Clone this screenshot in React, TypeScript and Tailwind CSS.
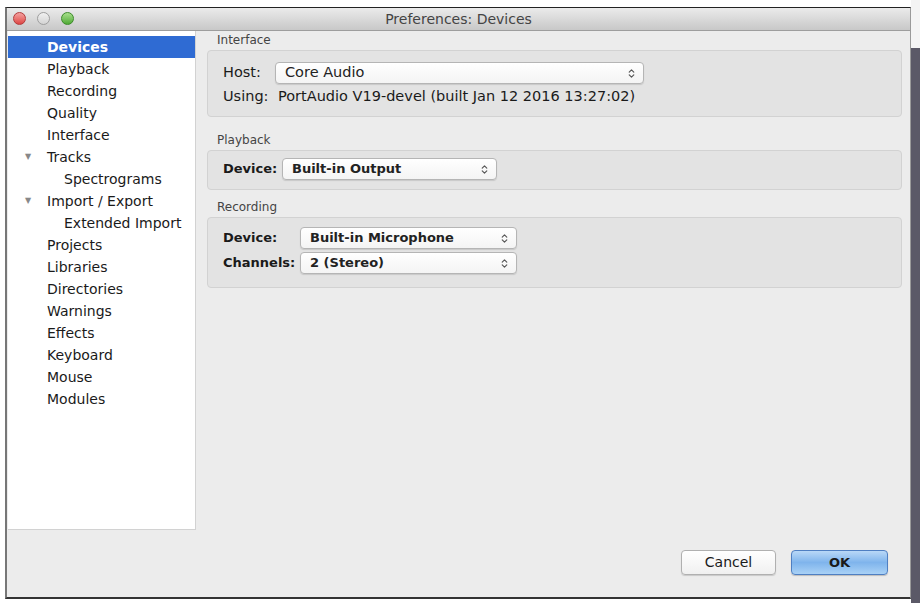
import { ChevronsUpDown } from "lucide-react";

const font = { fontFamily: '"DejaVu Sans", "Liberation Sans", sans-serif' };

type NavItem = { label: string; depth: 0 | 1; open?: boolean };

const navItems: NavItem[] = [
  { label: "Devices", depth: 0 },
  { label: "Playback", depth: 0 },
  { label: "Recording", depth: 0 },
  { label: "Quality", depth: 0 },
  { label: "Interface", depth: 0 },
  { label: "Tracks", depth: 0, open: true },
  { label: "Spectrograms", depth: 1 },
  { label: "Import / Export", depth: 0, open: true },
  { label: "Extended Import", depth: 1 },
  { label: "Projects", depth: 0 },
  { label: "Libraries", depth: 0 },
  { label: "Directories", depth: 0 },
  { label: "Warnings", depth: 0 },
  { label: "Effects", depth: 0 },
  { label: "Keyboard", depth: 0 },
  { label: "Mouse", depth: 0 },
  { label: "Modules", depth: 0 },
];

function Popup({ value, width, bold }: { value: string; width: string; bold?: boolean }) {
  return (
    <div
      className={`${width} h-[22px] shrink-0 flex items-center justify-between pl-[9px] pr-[6px] rounded-[4px] border border-[#b5b5b5] bg-gradient-to-b from-white to-[#f4f4f4] shadow-[0_1px_1px_rgba(0,0,0,0.12)] text-[#222] ${bold ? "font-bold text-[13px]" : "text-[14.5px]"}`}
    >
      <span>{value}</span>
      <ChevronsUpDown className="w-[11px] h-[11px] text-[#555]" strokeWidth={2.5} />
    </div>
  );
}

function Group({ title, box, children }: { title: string; box: string; children: React.ReactNode }) {
  return (
    <div className="flex flex-col">
      <div className="text-[12px] text-[#444] pl-[10px] h-[19px] leading-[19px]">{title}</div>
      <div className={`bg-[#e3e3e3] border border-[#d2d2d2] rounded-[4px] px-[15px] flex flex-col gap-[3px] ${box}`}>
        {children}
      </div>
    </div>
  );
}

export default function App() {
  return (
    <div className="w-[920px] h-[603px] bg-white flex overflow-hidden text-[#1a1a1a]" style={font}>
      <div className="w-[5px] shrink-0" />

      {/* dialog window */}
      <div className="mt-[7px] w-[906px] h-[592px] shrink-0 flex flex-col border-t border-[#222] border-l-2 border-l-[#777] border-b-2 border-b-[#333] border-r border-r-[#9a9a9a]">
        <div className="h-[23px] shrink-0 relative flex items-center justify-center bg-gradient-to-b from-[#ebebeb] to-[#c8c8c8] border-b border-[#9d9d9d]">
          <div className="absolute left-[6px] top-[4px] flex gap-[11px]">
            <span className="w-[13px] h-[13px] rounded-full bg-gradient-to-b from-[#f3a0a0] to-[#dd4444] border border-[#b23b3b]" />
            <span className="w-[13px] h-[13px] rounded-full bg-gradient-to-b from-[#f0f0f0] to-[#d4d4d4] border border-[#9e9e9e]" />
            <span className="w-[13px] h-[13px] rounded-full bg-gradient-to-b from-[#a8e08c] to-[#4faa34] border border-[#3c8a2a]" />
          </div>
          <span className="text-[14px] text-[#444]">Preferences: Devices</span>
        </div>

        <div className="flex-1 bg-[#ececec] flex flex-col">
          <div className="flex">
            {/* category list */}
            <div className="ml-[1px] w-[188px] h-[499px] bg-white border-r border-b border-[#d2d2d2] pt-[5px] shrink-0">
              {navItems.map((item, i) => (
                <div
                  key={item.label}
                  className={`h-[22px] flex items-center text-[14px] ${i === 0 ? "bg-[#2f6bd3] text-white font-bold" : ""}`}
                >
                  <span className="w-[39px] pl-[17px] text-[8px] text-[#888]">{item.open ? "▼" : ""}</span>
                  <span className={item.depth === 1 ? "pl-[17px]" : ""}>{item.label}</span>
                </div>
              ))}
            </div>

            {/* device settings */}
            <div className="ml-[11px] w-[695px] flex flex-col">
              <Group title="Interface" box="h-[67px] pt-[11px]">
                <div className="flex items-center text-[14.5px]">
                  <span className="w-[52px]">Host:</span>
                  <Popup value="Core Audio" width="w-[369px]" />
                </div>
                <div className="flex items-center text-[14.5px] h-[20px]">
                  <span className="w-[55px]">Using:</span>
                  <span>PortAudio V19-devel (built Jan 12 2016 13:27:02)</span>
                </div>
              </Group>

              <div className="h-[14px]" />
              <Group title="Playback" box="h-[40px] pt-[7px]">
                <div className="flex items-center text-[13px] font-bold">
                  <span className="w-[59px]">Device:</span>
                  <Popup value="Built-in Output" width="w-[215px]" bold />
                </div>
              </Group>

              <div className="h-[8px]" />
              <Group title="Recording" box="h-[71px] pt-[9px]">
                <div className="flex items-center text-[13px] font-bold">
                  <span className="w-[77px]">Device:</span>
                  <Popup value="Built-in Microphone" width="w-[217px]" bold />
                </div>
                <div className="flex items-center text-[13px] font-bold">
                  <span className="w-[77px]">Channels:</span>
                  <Popup value="2 (Stereo)" width="w-[217px]" bold />
                </div>
              </Group>
            </div>
          </div>

          <div className="flex-1 flex items-center justify-end gap-[15px] pr-[22px] pb-[2px]">
            <button className="w-[95px] h-[25px] rounded-[4px] border border-[#b0b0b0] bg-gradient-to-b from-white to-[#f0f0f0] shadow-[0_1px_1px_rgba(0,0,0,0.15)] text-[14px]">
              Cancel
            </button>
            <button className="w-[97px] h-[25px] rounded-[4px] border border-[#4f7fc2] bg-gradient-to-b from-[#b9d8f7] via-[#7fb4ec] to-[#a9d1f6] shadow-[0_1px_1px_rgba(0,0,0,0.2)] text-[13px] font-bold">
              OK
            </button>
          </div>
        </div>
      </div>

      {/* backdrop beyond the window edge */}
      <div className="flex-1 flex flex-col">
        <div className="h-[48px] bg-[#f4f4f4]" />
        <div className="flex-1 bg-[#5b5967]" />
      </div>
    </div>
  );
}
